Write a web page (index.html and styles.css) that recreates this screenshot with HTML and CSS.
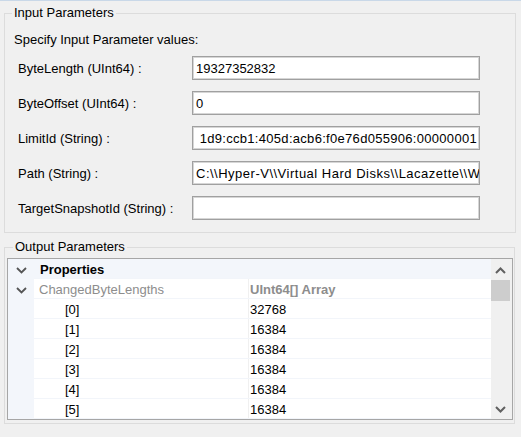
FILE: index.html
```html
<!DOCTYPE html>
<html>
<head>
<meta charset="utf-8">
<link rel="stylesheet" href="styles.css">
</head>
<body>
<div class="topline"></div>
<fieldset class="group input-group">
  <legend>Input Parameters</legend>
  <div class="hint">Specify Input Parameter values:</div>
  <div class="params">
    <div class="label">ByteLength (UInt64) :</div>
    <div class="box"><span>19327352832</span></div>
    <div class="label">ByteOffset (UInt64) :</div>
    <div class="box"><span>0</span></div>
    <div class="label">LimitId (String) :</div>
    <div class="box box-end"><span class="limit">1d9:ccb1:405d:acb6:f0e76d055906:00000001</span></div>
    <div class="label">Path (String) :</div>
    <div class="box"><span class="path">C:\\Hyper-V\\Virtual Hard Disks\\Lacazette\\W</span></div>
    <div class="label">TargetSnapshotId (String) :</div>
    <div class="box"><span></span></div>
  </div>
</fieldset>
<fieldset class="group output-group">
  <legend>Output Parameters</legend>
  <div class="grid">
    <div class="rows">
      <div class="row cat">
        <div class="margin"><svg class="chev" width="11" height="7" viewBox="0 0 11 7"><polyline points="1,1 5.5,5.5 10,1" fill="none" stroke="#555" stroke-width="1.8"/></svg></div>
        <div class="cat-name">Properties</div>
      </div>
      <div class="row">
        <div class="margin"><svg class="chev" width="11" height="7" viewBox="0 0 11 7"><polyline points="1,1 5.5,5.5 10,1" fill="none" stroke="#555" stroke-width="1.8"/></svg></div>
        <div class="name dim">ChangedByteLengths</div>
        <div class="value dim bold">UInt64[] Array</div>
      </div>
      <div class="row"><div class="margin"></div><div class="name sub">[0]</div><div class="value">32768</div></div>
      <div class="row"><div class="margin"></div><div class="name sub">[1]</div><div class="value">16384</div></div>
      <div class="row"><div class="margin"></div><div class="name sub">[2]</div><div class="value">16384</div></div>
      <div class="row"><div class="margin"></div><div class="name sub">[3]</div><div class="value">16384</div></div>
      <div class="row"><div class="margin"></div><div class="name sub">[4]</div><div class="value">16384</div></div>
      <div class="row"><div class="margin"></div><div class="name sub">[5]</div><div class="value">16384</div></div>
    </div>
    <div class="scrollbar">
      <div class="sb-btn"><svg width="11" height="7" viewBox="0 0 11 7"><polyline points="1,6 5.5,1.5 10,6" fill="none" stroke="#606060" stroke-width="2"/></svg></div>
      <div class="sb-thumb"></div>
      <div class="sb-track"></div>
      <div class="sb-btn"><svg width="11" height="7" viewBox="0 0 11 7"><polyline points="1,1 5.5,5.5 10,1" fill="none" stroke="#606060" stroke-width="2"/></svg></div>
    </div>
  </div>
</fieldset>
</body>
</html>
```
FILE: styles.css
```css
html, body {
  margin: 0;
  padding: 0;
}
body {
  width: 521px;
  height: 437px;
  background: #f0f0f0;
  font-family: "Liberation Sans", Arial, sans-serif;
  font-size: 13px;
  color: #000;
  overflow: hidden;
}
.topline {
  height: 1px;
  background: #c9d8e8;
}
.group {
  border: 1px solid #dcdcdc;
  margin: 0 5px 0 4px;
  min-width: 0;
}
.group legend {
  font-size: 13px;
  line-height: 16px;
  padding: 0 2px;
}
.input-group {
  margin-top: 4px;
  padding: 0 0 12px 9px;
}
.input-group legend {
  margin-left: -2px;
}
.hint {
  line-height: 16px;
  margin-top: 11px;
}
.params {
  display: grid;
  grid-template-columns: 174px 288px;
  grid-auto-rows: 24px;
  row-gap: 11px;
  margin-top: 8px;
  padding-left: 4px;
}
.label {
  display: flex;
  align-items: center;
  white-space: nowrap;
}
.box {
  display: flex;
  align-items: center;
  background: #fff;
  border: 1px solid #a0a0a0;
  box-shadow: inset 0 0 0 1px #d6d6d6;
  padding: 0 3px;
  overflow: hidden;
  white-space: nowrap;
}
.box span {
  flex: none;
}
.box-end {
  justify-content: flex-end;
  padding-right: 2px;
}
.limit {
  letter-spacing: 0.3px;
}
.path {
  letter-spacing: 0.5px;
}
.output-group {
  margin-top: 6px;
  margin-right: 6px;
  padding: 0 1px 3px 2px;
}
.output-group legend {
  margin-left: 6px;
}
.grid {
  margin-top: 3px;
  border: 1px solid #a6a6a6;
  background: #fff;
  display: flex;
  height: 160px;
}
.rows {
  flex: 1;
  display: flex;
  flex-direction: column;
}
.row {
  height: 20px;
  display: flex;
  box-sizing: border-box;
  border-bottom: 1px solid #f2f5fa;
}
.row .margin {
  width: 26px;
  flex: none;
  background: #f3f6fb;
  display: flex;
  align-items: center;
  justify-content: center;
  margin-bottom: -1px;
  padding-top: 2px;
  box-sizing: border-box;
}
.chev {
  display: block;
  margin-left: 1px;
}
.row.cat {
  background: #f3f6fb;
}
.cat-name {
  font-weight: bold;
  line-height: 17px;
  padding-top: 2px;
  padding-left: 6px;
}
.name {
  width: 214px;
  flex: none;
  line-height: 17px;
  padding-top: 2px;
  padding-left: 5px;
  box-sizing: border-box;
  white-space: nowrap;
}
.name.sub {
  padding-left: 31px;
}
.value {
  flex: 1;
  border-left: 1px solid #f0f0f0;
  line-height: 17px;
  padding-top: 2px;
  padding-left: 1px;
  white-space: nowrap;
}
.dim {
  color: #8d8d8d;
}
.bold {
  font-weight: bold;
}
.scrollbar {
  width: 21px;
  flex: none;
  background: #f0f0f0;
  display: flex;
  flex-direction: column;
}
.sb-btn {
  height: 21px;
  display: flex;
  align-items: center;
  justify-content: center;
  padding-right: 2px;
  padding-top: 2px;
  box-sizing: border-box;
}
.sb-thumb {
  height: 21px;
  margin-right: 2px;
  background: #cdcdcd;
}
.sb-track {
  flex: 1;
}
```
